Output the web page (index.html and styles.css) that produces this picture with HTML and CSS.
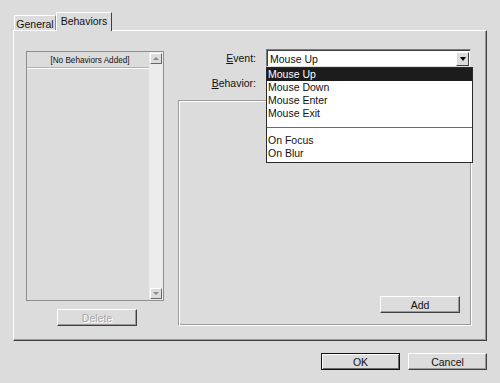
FILE: index.html
```html
<!DOCTYPE html>
<html>
<head>
<meta charset="utf-8">
<link rel="stylesheet" href="styles.css">
</head>
<body>
<div class="dialog">
  <div class="tabs">
    <div class="tab">General</div>
    <div class="tab tab-active">Behaviors</div>
  </div>
  <div class="panel">
    <div class="left-col">
      <div class="listbox">
        <div class="list-main">
          <div class="list-header">[No Behaviors Added]</div>
          <div class="list-body"></div>
        </div>
        <div class="scrollbar">
          <div class="sb-btn"><span class="tri-up"></span></div>
          <div class="sb-track"></div>
          <div class="sb-btn"><span class="tri-down-small"></span></div>
        </div>
      </div>
      <div class="btn btn-delete">Delete</div>
    </div>
    <div class="right-col">
      <div class="row row-event">
        <div class="label"><u>E</u>vent:</div>
        <div class="combo">
          <div class="combo-text">Mouse Up</div>
          <div class="combo-btn"><span class="tri-down"></span></div>
          <div class="dropdown">
            <div class="opt opt-sel">Mouse Up</div>
            <div class="opt">Mouse Down</div>
            <div class="opt">Mouse Enter</div>
            <div class="opt">Mouse Exit</div>
            <div class="sep"></div>
            <div class="opt">On Focus</div>
            <div class="opt">On Blur</div>
          </div>
        </div>
      </div>
      <div class="row row-behavior">
        <div class="label"><u>B</u>ehavior:</div>
      </div>
      <div class="behavior-box">
        <div class="btn btn-add">Add</div>
      </div>
    </div>
  </div>
  <div class="footer">
    <div class="btn btn-ok">OK</div>
    <div class="btn">Cancel</div>
  </div>
</div>
</body>
</html>
```
FILE: styles.css
```css
* { box-sizing: border-box; }
html, body {
  margin: 0;
  padding: 0;
}
body {
  width: 500px;
  height: 383px;
  background: #dcdcdc;
  font-family: "Liberation Sans", Arial, sans-serif;
  font-size: 10.5px;
  color: #111;
  overflow: hidden;
}
u { text-decoration: underline; text-underline-offset: 1px; }

.dialog {
  padding: 12px 13px 0 13px;
}

.tabs {
  display: flex;
  align-items: flex-end;
  height: 19px;
  margin-bottom: -1px;
  padding-left: 1px;
}
.tab {
  height: 16px;
  width: 42px;
  border-top: 1px solid #fff;
  border-left: 1px solid #fff;
  border-right: 1px solid #8a8a8a;
  background: #dcdcdc;
  display: flex;
  align-items: center;
  justify-content: center;
  padding-top: 1px;
}
.tab-active {
  position: relative;
  z-index: 2;
  height: 19px;
  width: 56px;
  border-right: 1px solid #404040;
  padding-top: 0;
  padding-bottom: 3px;
}

.panel {
  height: 311px;
  border-top: 1px solid #fff;
  border-left: 1px solid #fff;
  border-right: 1px solid #404040;
  border-bottom: 1px solid #404040;
  box-shadow: inset -1px -1px 0 #9a9a9a;
  display: flex;
  position: relative;
  z-index: 1;
}

.left-col {
  margin-left: 12px;
  margin-top: 20px;
  width: 138px;
  display: flex;
  flex-direction: column;
}
.listbox {
  width: 138px;
  height: 250px;
  border: 1px solid #8e8e8e;
  display: flex;
  background: #dcdcdc;
}
.list-main {
  flex: 1;
  display: flex;
  flex-direction: column;
}
.list-header {
  height: 17px;
  border-bottom: 1px solid #fff;
  box-shadow: 0 -1px 0 #b0b0b0 inset;
  font-size: 8.2px;
  display: flex;
  align-items: center;
  justify-content: center;
  padding-left: 4px;
}
.list-body { flex: 1; }
.scrollbar {
  width: 14px;
  background: #ececec;
  display: flex;
  flex-direction: column;
  padding: 1px 1px 1px 1px;
}
.sb-btn {
  height: 11px;
  background: #dcdcdc;
  border-top: 1px solid #fff;
  border-left: 1px solid #fff;
  border-right: 1px solid #6a6a6a;
  border-bottom: 1px solid #6a6a6a;
  display: flex;
  align-items: center;
  justify-content: center;
}
.sb-track { flex: 1; }
.tri-up {
  width: 0; height: 0;
  border-left: 3px solid transparent;
  border-right: 3px solid transparent;
  border-bottom: 3px solid #8a8a8a;
}
.tri-down-small {
  width: 0; height: 0;
  border-left: 3px solid transparent;
  border-right: 3px solid transparent;
  border-top: 3px solid #8a8a8a;
}

.btn {
  width: 79px;
  height: 17px;
  background: #dcdcdc;
  border-top: 1px solid #fff;
  border-left: 1px solid #fff;
  border-right: 1px solid #404040;
  border-bottom: 1px solid #404040;
  box-shadow: inset -1px -1px 0 #9a9a9a;
  display: flex;
  align-items: center;
  justify-content: center;
}
.btn-delete {
  margin-top: 8px;
  margin-left: 31px;
  width: 80px;
  color: #a6a6a6;
  text-shadow: 1px 1px 0 #fff;
}

.right-col {
  margin-left: 14px;
  display: flex;
  flex-direction: column;
}
.row {
  display: flex;
  align-items: center;
}
.row-event {
  margin-top: 18px;
  height: 18px;
}
.label {
  width: 79px;
  text-align: right;
  padding-right: 1px;
}
.combo {
  position: relative;
  margin-left: 9px;
  width: 205px;
  height: 18px;
  background: #fff;
  border-top: 1px solid #7a7a7a;
  border-left: 1px solid #7a7a7a;
  border-right: 1px solid #dcdcdc;
  border-bottom: 1px solid #dcdcdc;
  box-shadow: inset 1px 1px 0 #404040;
  display: flex;
  align-items: center;
}
.combo-text {
  flex: 1;
  padding-left: 3px;
  padding-top: 1px;
}
.combo-btn {
  width: 13px;
  height: 14px;
  margin-right: 1px;
  margin-top: 1px;
  background: #dcdcdc;
  border-top: 1px solid #fff;
  border-left: 1px solid #fff;
  border-right: 1px solid #404040;
  border-bottom: 1px solid #404040;
  display: flex;
  align-items: center;
  justify-content: center;
}
.tri-down {
  width: 0; height: 0;
  border-left: 3.5px solid transparent;
  border-right: 3.5px solid transparent;
  border-top: 4px solid #000;
}
.dropdown {
  position: absolute;
  left: -1px;
  top: 17px;
  width: 207px;
  height: 96px;
  background: #fff;
  border: 1px solid #2a2a2a;
  z-index: 5;
}
.opt {
  height: 13px;
  line-height: 13px;
  padding-left: 1px;
}
.opt-sel {
  background: #1c1c1c;
  color: #fff;
}
.sep {
  height: 14px;
  background: linear-gradient(#fff 0 7px, #6a6a6a 7px 8px, #fff 8px);
}

.row-behavior {
  margin-top: 9px;
  height: 14px;
}

.behavior-box {
  margin-top: 10px;
  width: 294px;
  height: 226px;
  border-top: 1px solid #9a9a9a;
  border-left: 1px solid #9a9a9a;
  border-right: 1px solid #fff;
  border-bottom: 1px solid #fff;
  box-shadow: inset 1px 1px 0 #fff, inset -1px -1px 0 #9a9a9a;
  display: flex;
  align-items: flex-end;
  justify-content: flex-end;
  padding: 0 11px 12px 0;
}
.btn-add {
  width: 80px;
}

.footer {
  display: flex;
  justify-content: flex-end;
  gap: 8px;
  margin-top: 12px;
}
.btn-ok {
  border: 1px solid #111;
  box-shadow: inset 1px 1px 0 #fff, inset -1px -1px 0 #6a6a6a;
}
```
